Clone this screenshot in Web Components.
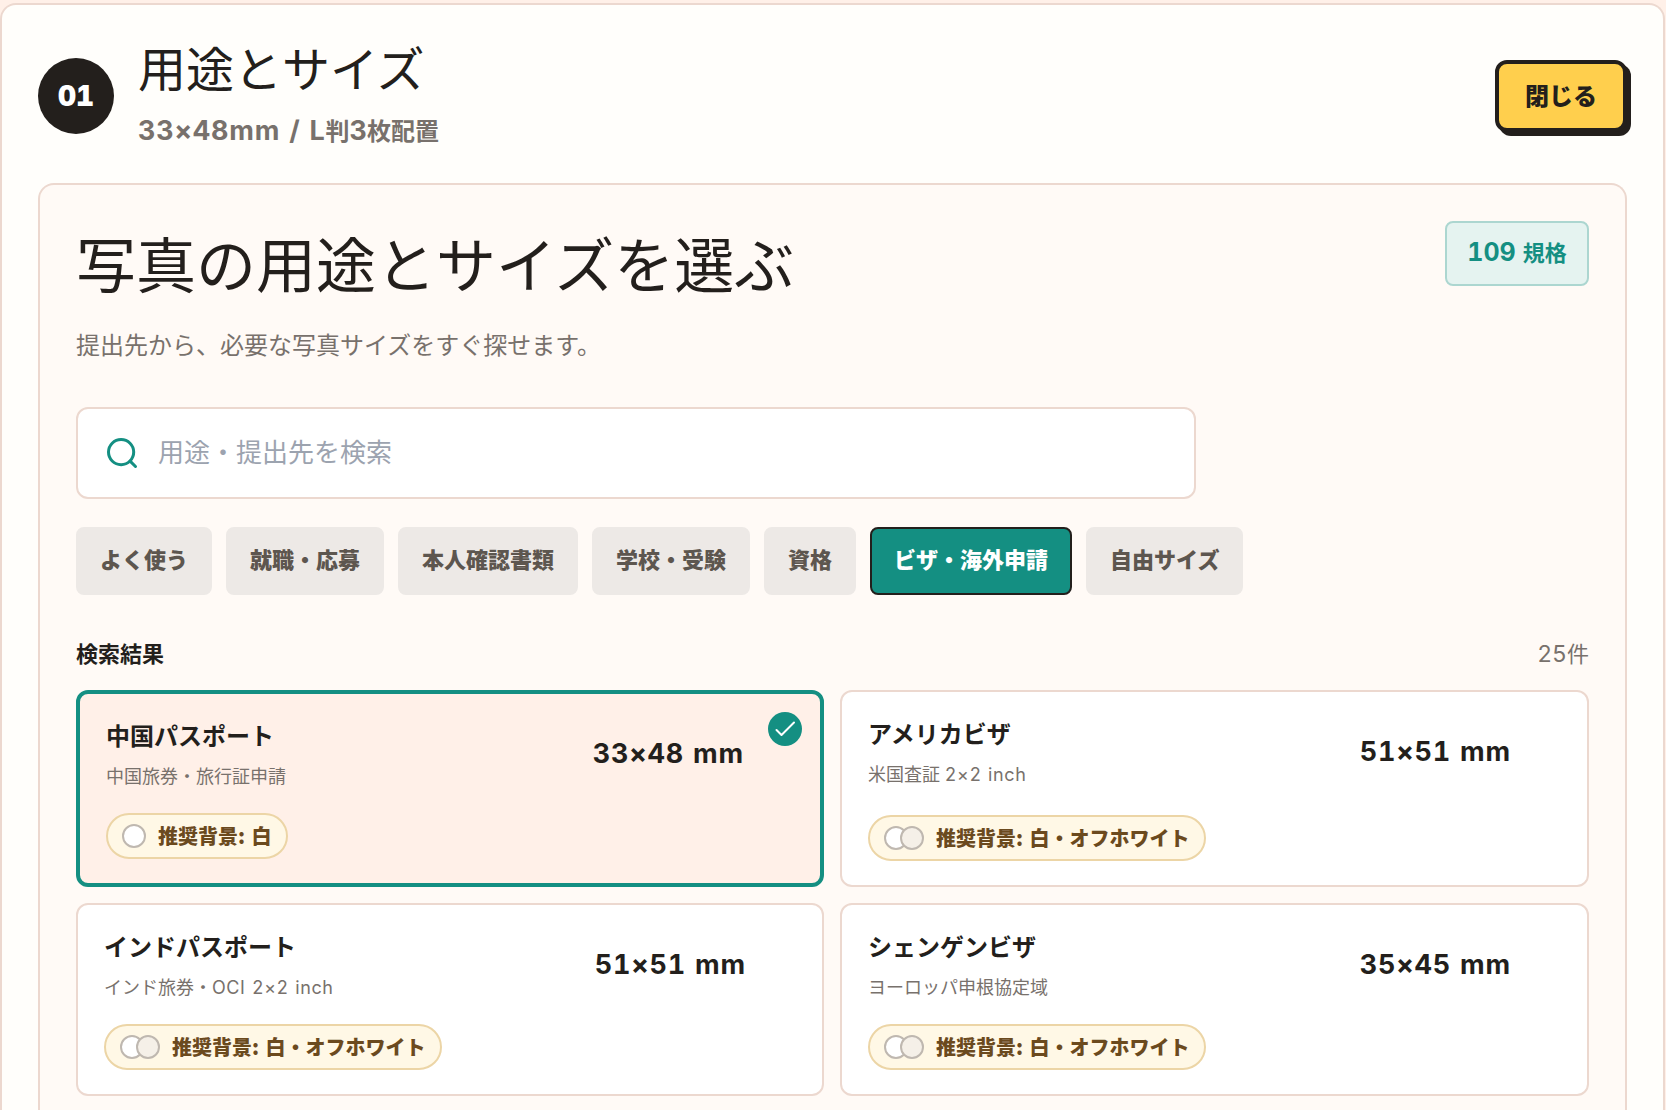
<!DOCTYPE html>
<html lang="ja">
<head>
<meta charset="utf-8">
<title>用途とサイズ</title>
<style>
  html, body {
    margin: 0;
    height: 1110px;
    overflow: hidden;
  }

  body {
    --ink: #231f1c;
    --muted: #78716c;
    --line: #ecd8cf;
    --teal: #148f82;
    --peach: #fff0e8;

    display: flow-root;
    background: var(--peach);
    color: var(--ink);
    font-family: Inter, "Noto Sans CJK JP", sans-serif;
    font-variant-numeric: tabular-nums;
  }
</style>
</head>
<body>

<step-panel>
  <span slot="title">用途とサイズ</span>
  <step-summary slot="summary"></step-summary>
  <size-picker></size-picker>
</step-panel>

<script>
class BaseElement extends HTMLElement {
  constructor() {
    super();
    const template = document.createElement('template');
    template.innerHTML = this.render();
    this.attachShadow({ mode: 'open' });
    this.shadowRoot.appendChild(template.content.cloneNode(true));
  }
}

class StepPanel extends BaseElement {
  render() {
    return `
      <style>
      :host {
        display: block;
        box-sizing: border-box;
        width: 1665px;
        height: 1107px;
        margin-top: 3px;
        border: 2px solid var(--line);
        border-bottom: 0;
        border-radius: 16px 16px 0 0;
        background: #fffefb;
        padding: 31px 36px 0;
      }

      header {
        display: flex;
        align-items: center;
        height: 120px;
        margin-bottom: 27px;
      }

      .number {
        display: flex;
        align-items: center;
        justify-content: center;
        width: 76px;
        height: 76px;
        border-radius: 50%;
        background: var(--ink);
        color: #fff;
        font-size: 28px;
        font-weight: 900;
      }

      .text {
        flex: 1;
        margin-left: 24px;
      }

      h2 {
        margin: 0;
        font-size: 48px;
        line-height: 70px;
        font-weight: 400;
      }

      .summary {
        line-height: 52px;
      }

      button {
        box-sizing: border-box;
        width: 132px;
        height: 72px;
        padding: 0 0 4px;
        border: 4px solid var(--ink);
        border-radius: 12px;
        box-shadow: 4px 4px 0 var(--ink);
        background: #ffcf4d;
        color: var(--ink);
        font: 900 24px "Noto Sans CJK JP", sans-serif;
      }
      </style>

      <header>
        <div class="number">01</div>
        <div class="text">
          <h2><slot name="title"></slot></h2>
          <div class="summary"><slot name="summary"></slot></div>
        </div>
        <button>閉じる</button>
      </header>
      <slot></slot>
    `;
  }
}

class StepSummary extends BaseElement {
  render() {
    return `
      <style>
      :host {
        display: block;
        color: var(--muted);
        font-size: 24px;
        font-weight: 700;
        white-space: nowrap;
      }

      .latin {
        font-size: 27px;
        letter-spacing: 0.8px;
        word-spacing: 1px;
      }

      .latin + .latin {
        letter-spacing: 0;
      }
      </style>
      <span class="latin">33×48mm / L</span>判<span class="latin">3</span>枚配置
    `;
  }
}

class SizePicker extends BaseElement {
  render() {
    return `
      <style>
      :host {
        display: block;
        box-sizing: border-box;
        width: 1589px;
        height: 927px;
        border: 2px solid var(--line);
        border-bottom: 0;
        border-radius: 16px 16px 0 0;
        background: #fffaf6;
        padding: 36px 36px 0;
      }

      .top {
        display: flex;
        justify-content: space-between;
        align-items: flex-start;
      }

      h1 {
        margin: 1px 0 0;
        font-size: 60px;
        line-height: 88px;
        font-weight: 400;
      }

      .total {
        display: flex;
        align-items: baseline;
        justify-content: center;
        box-sizing: border-box;
        width: 144px;
        height: 65px;
        border: 2px solid #acd6d0;
        border-radius: 8px;
        background: #e5f3f0;
        color: var(--teal);
        font-size: 22px;
        font-weight: 700;
        line-height: 59px;
      }

      .total b {
        margin-right: 7px;
        font-size: 25px;
        font-weight: 700;
      }

      p {
        margin: 16px 0 41px;
        color: var(--muted);
        font-size: 24px;
        line-height: 40px;
      }

      nav {
        display: flex;
        gap: 14px;
        margin: 28px 0 40px;
      }

      .results {
        display: flex;
        justify-content: space-between;
        margin-bottom: 15px;
        font-size: 22px;
        line-height: 39px;
        padding-bottom: 1px;
      }

      .results b {
        font-weight: 700;
      }

      .results span {
        color: var(--muted);
      }

      .results i {
        font-size: 23px;
        font-style: normal;
      }

      .grid {
        display: grid;
        grid-template-columns: 748px 749px;
        gap: 16px;
      }

      .latin {
        letter-spacing: 0.6px;
        word-spacing: 1px;
      }
      </style>

      <div class="top">
        <h1>写真の用途とサイズを選ぶ</h1>
        <div class="total"><b>109</b>規格</div>
      </div>
      <p>提出先から、必要な写真サイズをすぐ探せます。</p>
      <search-field></search-field>
      <nav>
        <filter-chip>よく使う</filter-chip>
        <filter-chip>就職・応募</filter-chip>
        <filter-chip>本人確認書類</filter-chip>
        <filter-chip>学校・受験</filter-chip>
        <filter-chip>資格</filter-chip>
        <filter-chip active>ビザ・海外申請</filter-chip>
        <filter-chip>自由サイズ</filter-chip>
      </nav>
      <div class="results"><b>検索結果</b><span><i>25</i>件</span></div>
      <div class="grid">
        <size-card selected size="33×48 mm">
          <span slot="name">中国パスポート</span>
          <span slot="note">中国旅券・旅行証申請</span>
          <background-tag slot="tag">白</background-tag>
        </size-card>
        <size-card size="51×51 mm">
          <span slot="name">アメリカビザ</span>
          <span slot="note">米国査証 <span class="latin">2×2 inch</span></span>
          <background-tag slot="tag" double>白・オフホワイト</background-tag>
        </size-card>
        <size-card size="51×51 mm">
          <span slot="name">インドパスポート</span>
          <span slot="note">インド旅券・<span class="latin">OCI 2×2 inch</span></span>
          <background-tag slot="tag" double>白・オフホワイト</background-tag>
        </size-card>
        <size-card size="35×45 mm">
          <span slot="name">シェンゲンビザ</span>
          <span slot="note">ヨーロッパ申根協定域</span>
          <background-tag slot="tag" double>白・オフホワイト</background-tag>
        </size-card>
      </div>
    `;
  }
}

class SearchField extends BaseElement {
  render() {
    return `
      <style>
      :host {
        display: flex;
        align-items: center;
        box-sizing: border-box;
        width: 1120px;
        height: 92px;
        border: 2px solid var(--line);
        border-radius: 12px;
        background: #fff;
        padding-left: 26px;
      }

      svg {
        flex: none;
        margin-right: 18px;
      }

      input {
        flex: 1;
        border: 0;
        padding: 0 0 6px;
        outline: 0;
        background: none;
        font: 26px "Noto Sans CJK JP", sans-serif;
      }

      input::placeholder {
        color: #9ca3af;
      }
      </style>
      <svg width="36" height="36" viewBox="0 0 24 24" fill="none" stroke="#148f82" stroke-width="2" stroke-linecap="round">
        <circle cx="11.4" cy="11.4" r="8.4"/>
        <path d="m21 21-3.6-3.6"/>
      </svg>
      <input placeholder="用途・提出先を検索">
    `;
  }
}

class FilterChip extends BaseElement {
  render() {
    return `
      <style>
      :host {
        box-sizing: border-box;
        height: 68px;
        border: 2px solid #ede9e6;
        border-radius: 8px;
        background: #ede9e6;
        color: #5d564f;
        padding: 0 22px;
        font-size: 22px;
        font-weight: 900;
        line-height: 62px;
        white-space: nowrap;
      }

      :host([active]) {
        border-color: var(--ink);
        background: var(--teal);
        color: #fff;
      }
      </style>
      <slot></slot>
    `;
  }
}

class SizeCard extends BaseElement {
  render() {
    return `
      <style>
      :host {
        display: grid;
        position: relative;
        box-sizing: border-box;
        min-height: 193px;
        border: 2px solid var(--line);
        border-radius: 12px;
        background: #fff;
        padding: 26px 26px 24px;
      }

      :host([selected]) {
        height: 197px;
        border: 4px solid var(--teal);
        background: var(--peach);
      }

      .row {
        display: flex;
        align-items: center;
        justify-content: space-between;
        height: 68px;
        padding-right: 50px;
      }

      .text {
        padding-top: 5px;
      }

      .name {
        font-size: 24px;
        font-weight: 700;
        line-height: 36px;
      }

      .note {
        margin-top: 4px;
        color: var(--muted);
        font-size: 18px;
        line-height: 35px;
        padding-bottom: 1px;
      }

      .size {
        padding-bottom: 2px;
        font-size: 27px;
        font-weight: 700;
        letter-spacing: 0.8px;
        word-spacing: 1px;
      }

      .tag {
        align-self: end;
      }

      .check {
        display: none;
        position: absolute;
        top: 18px;
        right: 18px;
      }

      :host([selected]) .check {
        display: block;
      }
      </style>

      <div class="row">
        <div class="text">
          <div class="name"><slot name="name"></slot></div>
          <div class="note"><slot name="note"></slot></div>
        </div>
        <div class="size"></div>
      </div>
      <div class="tag"><slot name="tag"></slot></div>
      <svg class="check" width="34" height="34" viewBox="0 0 34 34" fill="none">
        <circle cx="17" cy="17" r="17" fill="#148f82"/>
        <path d="m8.5 18 5 5L26 10.5" stroke="#fff" stroke-width="2" stroke-linecap="round" stroke-linejoin="round"/>
      </svg>
    `;
  }

  connectedCallback() {
    this.shadowRoot.querySelector('.size').textContent = this.getAttribute('size');
  }
}

class BackgroundTag extends BaseElement {
  render() {
    return `
      <style>
      :host {
        display: flex;
        align-items: center;
        box-sizing: border-box;
        width: fit-content;
        height: 46px;
        border: 2px solid #ecd5a6;
        border-radius: 23px;
        background: #fff8e6;
        color: #6b4a1e;
        padding: 0 14px;
        font: 900 20px "Noto Sans CJK JP", sans-serif;
        word-spacing: 2px;
        white-space: nowrap;
      }

      i {
        box-sizing: border-box;
        width: 24px;
        height: 24px;
        border: 2px solid #bfb8b0;
        border-radius: 50%;
        background: #fff;
      }

      i + i {
        display: none;
        margin-left: -8px;
        background: #f5f0e8;
      }

      :host([double]) i + i {
        display: block;
      }

      span {
        margin: -2px 0 0 12px;
      }
      </style>
      <i></i><i></i><span>推奨背景: <slot></slot></span>
    `;
  }
}

customElements.define('background-tag', BackgroundTag);
customElements.define('size-card', SizeCard);
customElements.define('filter-chip', FilterChip);
customElements.define('search-field', SearchField);
customElements.define('size-picker', SizePicker);
customElements.define('step-summary', StepSummary);
customElements.define('step-panel', StepPanel);
</script>
</body>
</html>
